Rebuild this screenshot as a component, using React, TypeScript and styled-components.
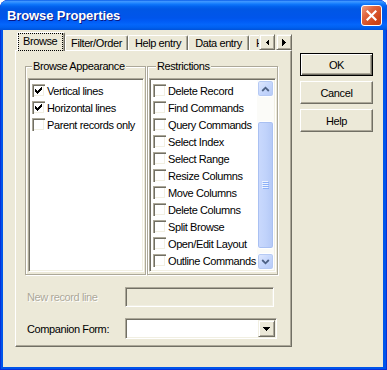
import React from "react";
import styled, { createGlobalStyle, css } from "styled-components";

const GlobalStyle = createGlobalStyle`
  html, body { margin: 0; padding: 0; background: #fff; }
  body {
    font-family: "Liberation Sans", Arial, sans-serif;
    font-size: 11px;
    letter-spacing: -0.4px;
    color: #000;
  }
  * { box-sizing: border-box; }
`;

const FACE = "#ECE9D8";

const Window = styled.div`
  width: 387px;
  height: 370px;
  display: flex;
  flex-direction: column;
  background: #0055ea;
  border-radius: 8px 8px 0 0;
  overflow: hidden;
  box-shadow: inset 1px 0 #0831d9, inset -1px 0 #0831d9, inset 0 -1px #0831d9;
`;

const TitleBar = styled.div`
  height: 30px;
  flex: none;
  display: flex;
  align-items: center;
  justify-content: space-between;
  padding: 0 5px 0 7px;
  background: linear-gradient(
    to bottom,
    #0a5ce8 0%,
    #3d95ff 5%,
    #2a8cff 9%,
    #0f77fb 14%,
    #0262ee 22%,
    #0057e5 30%,
    #0055eb 60%,
    #005bf5 70%,
    #0466fb 82%,
    #0060ef 92%,
    #0052d9 100%
  );
  border-radius: 8px 8px 0 0;
`;

const Title = styled.div`
  color: #fff;
  font-weight: bold;
  font-size: 13px;
  letter-spacing: -0.1px;
  text-shadow: 1px 1px 0 #0a1883;
  padding-top: 1px;
`;

const CloseButton = styled.div`
  width: 21px;
  height: 21px;
  border: 1px solid #fff;
  border-radius: 3px;
  background: linear-gradient(135deg, #ee9f82 0%, #e0643e 35%, #cf4619 75%, #c3401a 100%);
  display: flex;
  align-items: center;
  justify-content: center;
`;

const Client = styled.div`
  flex: 1;
  margin: 0 4px 3px 3px;
  background: ${FACE};
  display: flex;
  padding: 2px 0 0 12px;
`;

const TabControl = styled.div`
  width: 277px;
  display: flex;
  flex-direction: column;
`;

const TabStrip = styled.div`
  height: 18px;
  display: flex;
  position: relative;
  z-index: 1;
`;

const TabViewport = styled.div`
  width: 244px;
  height: 19px;
  display: flex;
  align-items: flex-start;
  overflow: hidden;
  padding-left: 2px;
`;

const Tab = styled.div<{ $w: number; $active?: boolean; $start?: boolean }>`
  flex: none;
  width: ${(p) => p.$w}px;
  height: ${(p) => (p.$active ? 19 : 15)}px;
  margin-top: ${(p) => (p.$active ? 0 : 3)}px;
  background: ${FACE};
  border-top: 1px solid #fff;
  border-left: 1px solid #fff;
  border-right: 1px solid #716f64;
  box-shadow: inset -1px 0 #aca899;
  border-radius: 2px 2px 0 0;
  display: flex;
  align-items: center;
  justify-content: ${(p) => (p.$active || p.$start ? "flex-start" : "center")};
  padding-bottom: ${(p) => (p.$active ? 1 : 0)}px;
  white-space: nowrap;
`;

const FocusLabel = styled.span`
  outline: 1px dotted #000;
  outline-offset: 0;
  padding: 1px 5px 2px 4px;
  line-height: 13px;
  margin-left: 1px;
`;

const PartialText = styled.span`
  padding-left: 6px;
`;

const ArrowGroup = styled.div`
  display: flex;
  gap: 1px;
  margin-top: 2px;
`;

const RaisedSquare = styled.div<{ $size: number }>`
  width: ${(p) => p.$size}px;
  height: ${(p) => p.$size}px;
  background: ${FACE};
  border: 1px solid;
  border-color: #f1efe2 #716f64 #716f64 #f1efe2;
  box-shadow: inset 1px 1px #fff, inset -1px -1px #aca899;
  display: flex;
  align-items: center;
  justify-content: center;
`;

const Panel = styled.div`
  height: 297px;
  background: ${FACE};
  border: 1px solid;
  border-color: #fff #716f64 #716f64 #fff;
  box-shadow: inset -1px -1px #aca899;
  padding: 15px 0 0 9px;
  display: flex;
  flex-direction: column;
`;

const GroupRow = styled.div`
  display: flex;
  gap: 1px;
`;

const GroupBox = styled.div<{ $w: number; $pl: number }>`
  position: relative;
  width: ${(p) => p.$w}px;
  height: 209px;
  border: 1px solid #aca899;
  box-shadow: inset 1px 1px #fff, 1px 1px #fff;
  padding: 11px 1px 2px ${(p) => p.$pl}px;
  display: flex;
  flex-direction: column;
`;

const GroupCaption = styled.div<{ $x: number }>`
  position: absolute;
  top: -7px;
  left: ${(p) => p.$x}px;
  padding: 0 1px;
  line-height: 13px;
  background: ${FACE};
  white-space: nowrap;
`;

const ListBox = styled.div`
  flex: 1;
  display: flex;
  background: #fff;
  border: 1px solid;
  border-color: #aca899 #fff #fff #aca899;
  box-shadow: inset 1px 1px #716f64, inset -1px -1px #f1efe2;
  padding: 1px;
  min-height: 0;
`;

const Items = styled.div`
  flex: 1;
  min-width: 0;
  overflow: hidden;
  padding-top: 2px;
  display: flex;
  flex-direction: column;
`;

const Item = styled.div`
  height: 17px;
  flex: none;
  display: flex;
  align-items: center;
  gap: 2px;
  padding-left: 2px;
  white-space: nowrap;
`;

const CheckBox = styled.span`
  flex: none;
  width: 13px;
  height: 13px;
  display: block;
  background: #fff;
  box-shadow: inset 1px 1px #aca899, inset 2px 2px #716f64, inset -1px -1px #fff,
    inset -2px -2px #f1efe2;
`;

const ScrollBar = styled.div`
  width: 17px;
  flex: none;
  display: flex;
  flex-direction: column;
  background: #fbfbf8;
`;

const ScrollButton = styled.div`
  width: 17px;
  height: 17px;
  flex: none;
  border: 1px solid #fff;
  border-radius: 3px;
  background: linear-gradient(135deg, #e2eafe 0%, #c6d7fc 50%, #b5c9f7 100%);
  box-shadow: inset 0 0 0 1px #b6caf4;
  display: flex;
  align-items: center;
  justify-content: center;
`;

const Track = styled.div`
  flex: 1;
  padding-top: 24px;
  display: flex;
  flex-direction: column;
`;

const Thumb = styled.div`
  height: 128px;
  border: 1px solid #fff;
  border-radius: 3px;
  background: linear-gradient(to right, #cad9fd 0%, #c1d3fb 50%, #b4c8f6 100%);
  box-shadow: inset 0 0 0 1px #a9c0f2;
  display: flex;
  align-items: center;
  justify-content: center;
`;

const FormGrid = styled.div`
  margin-top: 12px;
  margin-left: 2px;
  display: grid;
  grid-template-columns: 98px auto;
  grid-template-rows: 20px 21px;
  row-gap: 11px;
  align-items: center;
  justify-items: start;
`;

const FieldLabel = styled.span<{ $disabled?: boolean }>`
  white-space: nowrap;
  ${(p) =>
    p.$disabled &&
    css`
      color: #aca899;
      text-shadow: 1px 1px 0 #fff;
    `}
`;

const sunken = css`
  border: 1px solid;
  border-color: #aca899 #fff #fff #aca899;
  box-shadow: inset 1px 1px #716f64, inset -1px -1px #f1efe2;
`;

const TextBox = styled.div`
  width: 149px;
  height: 20px;
  background: ${FACE};
  ${sunken}
`;

const Combo = styled.div`
  width: 152px;
  height: 21px;
  background: #fff;
  ${sunken}
  padding: 1px;
  display: flex;
  justify-content: flex-end;
`;

const ButtonColumn = styled.div`
  margin: 21px 0 0 8px;
  display: flex;
  flex-direction: column;
  gap: 5px;
`;

const DialogButton = styled.div<{ $default?: boolean }>`
  width: 73px;
  height: 23px;
  background: ${FACE};
  display: flex;
  align-items: center;
  justify-content: center;
  ${(p) =>
    p.$default
      ? css`
          border: 1px solid #000;
          box-shadow: inset 1px 1px #fff, inset -1px -1px #716f64, inset -2px -2px #aca899;
        `
      : css`
          border: 1px solid;
          border-color: #fff #716f64 #716f64 #fff;
          box-shadow: inset -1px -1px #aca899;
        `}
`;

const CheckMark = () => (
  <svg width="13" height="13" viewBox="0 0 13 13" shapeRendering="crispEdges">
    <path
      d="M3 5h1v1h1v1h1v-1h1v-1h1v-1h1v-1h1v3h-1v1h-1v1h-1v1h-1v1h-1v-1h-1v-1h-1v-3z"
      fill="#000"
    />
  </svg>
);

const Check = ({ checked }: { checked?: boolean }) => (
  <CheckBox>{checked && <CheckMark />}</CheckBox>
);

const appearance = [
  { label: "Vertical lines", checked: true },
  { label: "Horizontal lines", checked: true },
  { label: "Parent records only", checked: false },
];

const restrictions = [
  "Delete Record",
  "Find Commands",
  "Query Commands",
  "Select Index",
  "Select Range",
  "Resize Columns",
  "Move Columns",
  "Delete Columns",
  "Split Browse",
  "Open/Edit Layout",
  "Outline Commands",
];

const tabs = [
  { label: "Filter/Order", w: 63 },
  { label: "Help entry", w: 60 },
  { label: "Data entry", w: 61 },
];

export default function App() {
  return (
    <>
      <GlobalStyle />
      <Window>
        <TitleBar>
          <Title>Browse Properties</Title>
          <CloseButton>
            <svg width="11" height="11" viewBox="0 0 11 11">
              <path d="M1.5 1.5 L9.5 9.5 M9.5 1.5 L1.5 9.5" stroke="#fff" strokeWidth="2.2" strokeLinecap="square" />
            </svg>
          </CloseButton>
        </TitleBar>
        <Client>
          <TabControl>
            <TabStrip>
              <TabViewport>
                <Tab $w={48} $active>
                  <FocusLabel>Browse</FocusLabel>
                </Tab>
                {tabs.map((t) => (
                  <Tab key={t.label} $w={t.w}>
                    {t.label}
                  </Tab>
                ))}
                <Tab $w={60} $start>
                  <PartialText>H</PartialText>
                </Tab>
              </TabViewport>
              <ArrowGroup>
                <RaisedSquare $size={16}>
                  <svg width="4" height="7" viewBox="0 0 4 7" shapeRendering="crispEdges">
                    <path d="M4 0 L4 7 L0.5 3.5 Z" fill="#000" />
                  </svg>
                </RaisedSquare>
                <RaisedSquare $size={16}>
                  <svg width="4" height="7" viewBox="0 0 4 7" shapeRendering="crispEdges">
                    <path d="M0 0 L0 7 L3.5 3.5 Z" fill="#000" />
                  </svg>
                </RaisedSquare>
              </ArrowGroup>
            </TabStrip>
            <Panel>
              <GroupRow>
                <GroupBox $w={121} $pl={2}>
                  <GroupCaption $x={6}>Browse Appearance</GroupCaption>
                  <ListBox>
                    <Items>
                      {appearance.map((a) => (
                        <Item key={a.label}>
                          <Check checked={a.checked} />
                          {a.label}
                        </Item>
                      ))}
                    </Items>
                  </ListBox>
                </GroupBox>
                <GroupBox $w={131} $pl={1}>
                  <GroupCaption $x={8}>Restrictions</GroupCaption>
                  <ListBox>
                    <Items>
                      {restrictions.map((r) => (
                        <Item key={r}>
                          <Check />
                          {r}
                        </Item>
                      ))}
                    </Items>
                    <ScrollBar>
                      <ScrollButton>
                        <svg width="9" height="6" viewBox="0 0 9 6">
                          <path d="M1.2 5 L4.5 1.7 L7.8 5" fill="none" stroke="#4d6185" strokeWidth="1.8" />
                        </svg>
                      </ScrollButton>
                      <Track>
                        <Thumb>
                          <svg width="7" height="8" viewBox="0 0 7 8" shapeRendering="crispEdges">
                            <path d="M0 0h6v1H0zM0 2h6v1H0zM0 4h6v1H0zM0 6h6v1H0z" fill="#eef4fe" />
                            <path d="M1 1h6v1H1zM1 3h6v1H1zM1 5h6v1H1zM1 7h6v1H1z" fill="#8cb0f8" />
                          </svg>
                        </Thumb>
                      </Track>
                      <ScrollButton>
                        <svg width="9" height="6" viewBox="0 0 9 6">
                          <path d="M1.2 1 L4.5 4.3 L7.8 1" fill="none" stroke="#4d6185" strokeWidth="1.8" />
                        </svg>
                      </ScrollButton>
                    </ScrollBar>
                  </ListBox>
                </GroupBox>
              </GroupRow>
              <FormGrid>
                <FieldLabel $disabled>New record line</FieldLabel>
                <TextBox />
                <FieldLabel>Companion Form:</FieldLabel>
                <Combo>
                  <RaisedSquare $size={17}>
                    <svg width="7" height="4" viewBox="0 0 7 4" shapeRendering="crispEdges">
                      <path d="M0 0h7v1H0zM1 1h5v1H1zM2 2h3v1H2zM3 3h1v1H3z" fill="#000" />
                    </svg>
                  </RaisedSquare>
                </Combo>
              </FormGrid>
            </Panel>
          </TabControl>
          <ButtonColumn>
            <DialogButton $default>OK</DialogButton>
            <DialogButton>Cancel</DialogButton>
            <DialogButton>Help</DialogButton>
          </ButtonColumn>
        </Client>
      </Window>
    </>
  );
}
